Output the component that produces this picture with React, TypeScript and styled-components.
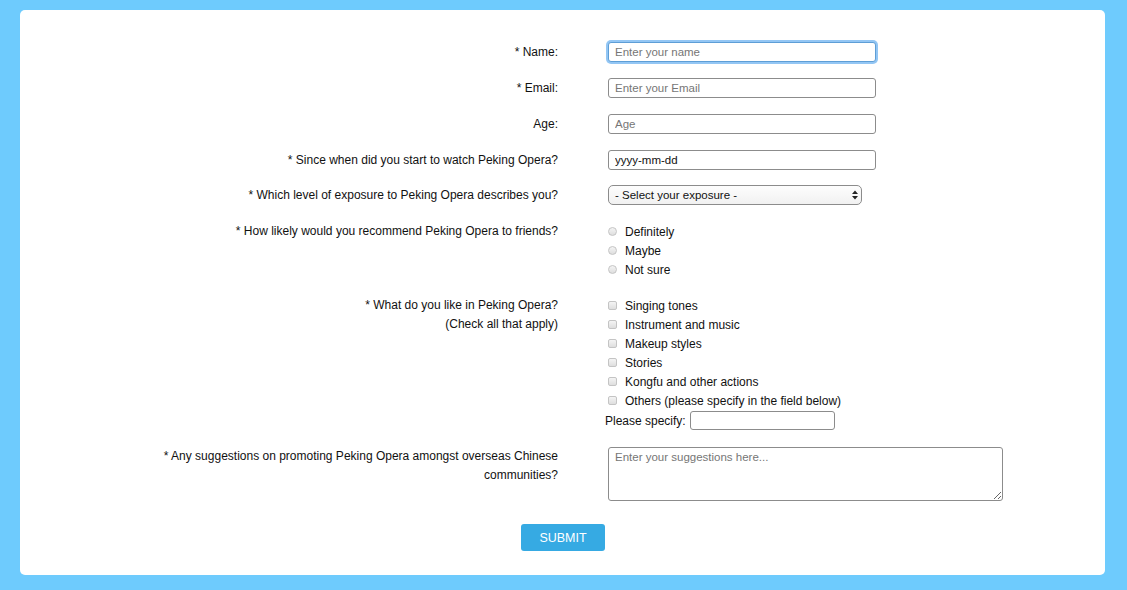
import React from "react";
import styled, { createGlobalStyle } from "styled-components";

const Global = createGlobalStyle`
  html, body { margin: 0; padding: 0; }
  body {
    background: #6ecbfd;
    font-family: "Liberation Sans", Arial, sans-serif;
    font-size: 12px;
    color: #111;
  }
`;

const Page = styled.div`
  padding: 10px 22px 15px 20px;
`;

const Card = styled.form`
  background: #fff;
  border-radius: 5px;
  padding: 32px 0 24px;
  display: flex;
  flex-direction: column;
  gap: 16px;
`;

const Row = styled.div<{ $mt?: number }>`
  display: grid;
  grid-template-columns: 538px 1fr;
  column-gap: 50px;
  align-items: start;
  margin-top: ${(p) => p.$mt ?? 0}px;
`;

const Label = styled.label<{ $pt?: number }>`
  text-align: right;
  line-height: 19px;
  padding-top: ${(p) => p.$pt ?? 0}px;
  color: #111;
`;

const TextInput = styled.input<{ $w?: number; $focus?: boolean; $h?: number }>`
  box-sizing: border-box;
  width: ${(p) => p.$w ?? 268}px;
  height: ${(p) => p.$h ?? 20}px;
  border: 1px solid ${(p) => (p.$focus ? "#5e9ed6" : "#8c8c8c")};
  border-radius: 3px;
  padding: 0 6px;
  font-family: inherit;
  font-size: 11.5px;
  color: #111;
  outline: none;
  box-shadow: ${(p) => (p.$focus ? "0 0 0 2px #93c6f4" : "none")};
  &::placeholder { color: #767676; }
`;

const SelectWrap = styled.div`
  position: relative;
  width: 254px;
`;

const Select = styled.select`
  box-sizing: border-box;
  width: 254px;
  height: 20px;
  appearance: none;
  -webkit-appearance: none;
  border: 1px solid #8c8c8c;
  border-radius: 5px;
  background: linear-gradient(#fdfdfd, #f1f1f1);
  padding: 0 6px;
  font-family: inherit;
  font-size: 11.5px;
  color: #111;
`;

const Arrows = styled.svg`
  position: absolute;
  right: 4px;
  top: 5px;
  pointer-events: none;
`;

const OptionList = styled.div`
  display: flex;
  flex-direction: column;
`;

const Option = styled.label`
  display: flex;
  align-items: center;
  height: 19px;
  gap: 9px;
  color: #111;
`;

const Radio = styled.span`
  box-sizing: border-box;
  width: 9px;
  height: 9px;
  border-radius: 50%;
  border: 1px solid #c4c4c4;
  background: linear-gradient(#f4f4f4, #dedede);
  flex: none;
`;

const Check = styled.span`
  box-sizing: border-box;
  width: 9px;
  height: 9px;
  border-radius: 2px;
  border: 1px solid #c4c4c4;
  background: linear-gradient(#f4f4f4, #dedede);
  flex: none;
`;

const Mark = styled.span`
  width: 8px;
  display: flex;
  justify-content: flex-start;
`;

const SpecifyRow = styled.div`
  display: flex;
  align-items: center;
  gap: 4px;
  margin-left: -3px;
  height: 19px;
  margin-top: 1px;
`;

const TextArea = styled.textarea`
  box-sizing: border-box;
  width: 395px;
  height: 54px;
  border: 1px solid #8c8c8c;
  border-radius: 3px;
  padding: 3px 6px;
  font-family: inherit;
  font-size: 11.5px;
  color: #111;
  resize: both;
  &::placeholder { color: #767676; }
`;

const Actions = styled.div`
  display: flex;
  justify-content: center;
  margin-top: 7px;
`;

const Submit = styled.button`
  width: 84px;
  height: 27px;
  border: none;
  border-radius: 3px;
  background: #36aae3;
  color: #fff;
  font-family: inherit;
  font-size: 12.5px;
  text-transform: uppercase;
  cursor: pointer;
  margin-left: 1px;
`;

const radios = ["Definitely", "Maybe", "Not sure"];
const checks = [
  "Singing tones",
  "Instrument and music",
  "Makeup styles",
  "Stories",
  "Kongfu and other actions",
  "Others (please specify in the field below)",
];

export default function App() {
  return (
    <Page>
      <Global />
      <Card onSubmit={(e) => e.preventDefault()}>
        <Row>
          <Label $pt={1}>* Name:</Label>
          <TextInput $focus placeholder="Enter your name" />
        </Row>
        <Row>
          <Label $pt={1}>* Email:</Label>
          <TextInput placeholder="Enter your Email" />
        </Row>
        <Row>
          <Label $pt={1}>Age:</Label>
          <TextInput placeholder="Age" />
        </Row>
        <Row>
          <Label $pt={1}>* Since when did you start to watch Peking Opera?</Label>
          <TextInput defaultValue="yyyy-mm-dd" />
        </Row>
        <Row $mt={-1}>
          <Label $pt={1}>* Which level of exposure to Peking Opera describes you?</Label>
          <SelectWrap>
            <Select defaultValue="">
              <option value="">- Select your exposure -</option>
            </Select>
            <Arrows width="6" height="10" viewBox="0 0 6 10">
              <path d="M0 4 L3 0.5 L6 4 Z M0 6 L3 9.5 L6 6 Z" fill="#222" />
            </Arrows>
          </SelectWrap>
        </Row>
        <Row $mt={1}>
          <Label>* How likely would you recommend Peking Opera to friends?</Label>
          <OptionList>
            {radios.map((r) => (
              <Option key={r}>
                <Mark><Radio /></Mark>
                {r}
              </Option>
            ))}
          </OptionList>
        </Row>
        <Row $mt={1}>
          <Label>
            * What do you like in Peking Opera?
            <br />
            (Check all that apply)
          </Label>
          <OptionList>
            {checks.map((c) => (
              <Option key={c}>
                <Mark><Check /></Mark>
                {c}
              </Option>
            ))}
            <SpecifyRow>
              Please specify:
              <TextInput $w={145} $h={19} />
            </SpecifyRow>
          </OptionList>
        </Row>
        <Row $mt={1}>
          <Label>
            * Any suggestions on promoting Peking Opera amongst overseas Chinese
            <br />
            communities?
          </Label>
          <TextArea placeholder="Enter your suggestions here..." />
        </Row>
        <Actions>
          <Submit type="submit">Submit</Submit>
        </Actions>
      </Card>
    </Page>
  );
}
